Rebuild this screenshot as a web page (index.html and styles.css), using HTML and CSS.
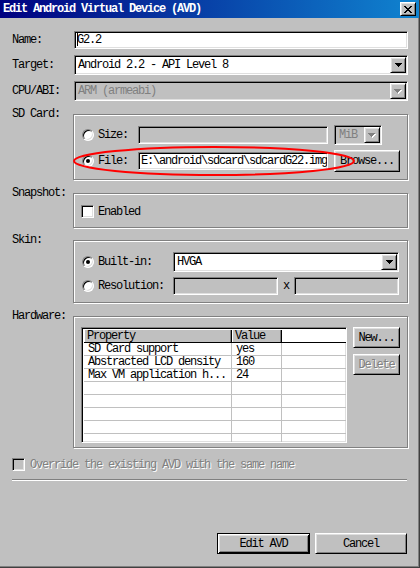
FILE: index.html
```html
<!DOCTYPE html>
<html>
<head>
<meta charset="utf-8">
<title>Edit Android Virtual Device (AVD)</title>
<link rel="stylesheet" href="styles.css">
</head>
<body>
<div class="window">
  <div class="titlebar">
    <span class="title">Edit Android Virtual Device (AVD)</span>
    <span class="close raised">
      <svg width="8" height="7" viewBox="0 0 8 7"><path d="M0 0h2v1H0z M6 0h2v1H6z M1 1h2v1H1z M5 1h2v1H5z M2 2h4v1H2z M3 3h2v1H3z M2 4h4v1H2z M1 5h2v1H1z M5 5h2v1H5z M0 6h2v1H0z M6 6h2v1H6z"/></svg>
    </span>
  </div>

  <div class="form">
    <div class="row r-name">
      <span class="lbl">Name:</span>
      <div class="edit field"><span class="caret"></span>G2.2</div>
    </div>

    <div class="row r-combo">
      <span class="lbl">Target:</span>
      <div class="combo field">
        <span class="combo-text">Android 2.2 - API Level 8</span>
        <span class="drop raised"><svg width="7" height="4" viewBox="0 0 7 4"><path d="M0 0h7v1H0z M1 1h5v1H1z M2 2h3v1H2z M3 3h1v1H3z"/></svg></span>
      </div>
    </div>

    <div class="row r-combo">
      <span class="lbl">CPU/ABI:</span>
      <div class="combo field off">
        <span class="combo-text">ARM (armeabi)</span>
        <span class="drop raised"><svg width="8" height="5" viewBox="0 0 8 5"><path class="hi" d="M1 1h7v1H1z M2 2h5v1H2z M3 3h3v1H3z M4 4h1v1H4z"/><path class="lo" d="M0 0h7v1H0z M1 1h5v1H1z M2 2h3v1H2z M3 3h1v1H3z"/></svg></span>
      </div>
    </div>

    <div class="row grp r-sd">
      <span class="lbl">SD Card:</span>
      <div class="group g-sd">
        <div class="opt o-size">
          <span class="radio"></span>
          <span class="opt-lbl w40">Size:</span>
          <div class="edit off w190"></div>
          <div class="combo off mib">
            <span class="combo-text">MiB</span>
            <span class="drop raised"><svg width="8" height="5" viewBox="0 0 8 5"><path class="hi" d="M1 1h7v1H1z M2 2h5v1H2z M3 3h3v1H3z M4 4h1v1H4z"/><path class="lo" d="M0 0h7v1H0z M1 1h5v1H1z M2 2h3v1H2z M3 3h1v1H3z"/></svg></span>
          </div>
        </div>
        <div class="opt o-file">
          <span class="radio on"></span>
          <span class="opt-lbl w40">File:</span>
          <div class="edit w190">E:\android\sdcard\sdcardG22.img</div>
          <span class="btn raised browse">Browse...</span>
        </div>
      </div>
    </div>

    <div class="row grp r-snap">
      <span class="lbl">Snapshot:</span>
      <div class="group g-snap">
        <div class="opt">
          <span class="check"></span>
          <span class="opt-lbl">Enabled</span>
        </div>
      </div>
    </div>

    <div class="row grp r-skin">
      <span class="lbl">Skin:</span>
      <div class="group g-skin">
        <div class="opt o-built">
          <span class="radio on"></span>
          <span class="opt-lbl w75">Built-in:</span>
          <div class="combo skin-combo">
            <span class="combo-text">HVGA</span>
            <span class="drop raised"><svg width="7" height="4" viewBox="0 0 7 4"><path d="M0 0h7v1H0z M1 1h5v1H1z M2 2h3v1H2z M3 3h1v1H3z"/></svg></span>
          </div>
        </div>
        <div class="opt o-res">
          <span class="radio"></span>
          <span class="opt-lbl w75">Resolution:</span>
          <div class="edit off w105"></div>
          <span class="times">x</span>
          <div class="edit off w105"></div>
        </div>
      </div>
    </div>

    <div class="row grp r-hw">
      <span class="lbl">Hardware:</span>
      <div class="group g-hw">
        <div class="table">
          <div class="thead">
            <span class="th">Property</span>
            <span class="th">Value</span>
            <span class="th"></span>
          </div>
          <div class="tr"><span class="td">SD Card support</span><span class="td">yes</span><span class="td"></span></div>
          <div class="tr"><span class="td">Abstracted LCD density</span><span class="td">160</span><span class="td"></span></div>
          <div class="tr"><span class="td">Max VM application h...</span><span class="td">24</span><span class="td"></span></div>
          <div class="tr"><span class="td"></span><span class="td"></span><span class="td"></span></div>
          <div class="tr"><span class="td"></span><span class="td"></span><span class="td"></span></div>
          <div class="tr"><span class="td"></span><span class="td"></span><span class="td"></span></div>
          <div class="tr"><span class="td"></span><span class="td"></span><span class="td"></span></div>
          <div class="tr"><span class="td"></span><span class="td"></span><span class="td"></span></div>
        </div>
        <div class="side">
          <span class="btn raised">New...</span>
          <span class="btn raised dis">Delete</span>
        </div>
      </div>
    </div>

    <div class="override">
      <span class="check off"></span>
      <span class="dis">Override the existing AVD with the same name</span>
    </div>

    <div class="sep"></div>

    <div class="actions">
      <span class="btn default w93">Edit AVD</span>
      <span class="btn raised w92">Cancel</span>
    </div>
  </div>

  <svg class="mark" width="290" height="34" viewBox="0 0 290 34"><ellipse cx="142" cy="16" rx="140" ry="14" fill="none" stroke="#f00" stroke-width="2"/></svg>
</div>
</body>
</html>
```

FILE: styles.css
```css
* { box-sizing: border-box; }

html, body {
  margin: 0;
  padding: 0;
}

body {
  width: 420px;
  height: 568px;
  overflow: hidden;
  background: #c0c0c0;
  color: #000;
  font-family: "Liberation Mono", "DejaVu Sans Mono", monospace;
  font-size: 12px;
  letter-spacing: -1.2px;
  line-height: 12px;
}

.window {
  position: relative;
  width: 420px;
  height: 568px;
  background: #c0c0c0;
  box-shadow: inset -1px -1px 0 #404040, inset -2px -2px 0 #808080;
}

/* ---------- title bar ---------- */
.titlebar {
  width: 419px;
  height: 18px;
  display: flex;
  align-items: center;
  justify-content: space-between;
  padding: 0 3px 0 3px;
  background: linear-gradient(90deg, #000080, #1084d0);
}

.title {
  color: #fff;
  font-weight: bold;
  white-space: nowrap;
}

.close {
  width: 16px;
  height: 14px;
  display: flex;
  align-items: center;
  justify-content: center;
}

/* ---------- bevels ---------- */
.raised {
  background: #c0c0c0;
  border: 1px solid;
  border-color: #fff #000 #000 #fff;
  box-shadow: inset 1px 1px 0 #dfdfdf, inset -1px -1px 0 #808080;
}

.edit, .combo, .check, .table {
  border: 1px solid;
  border-color: #808080 #fff #fff #808080;
  box-shadow: inset 1px 1px 0 #000, inset -1px -1px 0 #dfdfdf;
}

/* ---------- form grid ---------- */
.form {
  width: 407px;
  padding: 13px 0 0 12px;
}

.row {
  display: grid;
  grid-template-columns: 61px 335px;
  align-items: center;
}

.lbl { white-space: nowrap; }

.field { margin-left: 1px; width: 334px; }

.r-name { height: 18px; }
.r-combo { height: 20px; margin-top: 6px; }

.edit {
  height: 18px;
  background: #fff;
  padding: 0 2px;
  line-height: 16px;
  white-space: nowrap;
  overflow: hidden;
}

.edit.off { background: #c0c0c0; }

.caret {
  display: inline-block;
  width: 1px;
  height: 13px;
  background: #000;
  vertical-align: -3px;
  margin-right: -1px;
}

.combo {
  height: 20px;
  display: flex;
  align-items: center;
  background: #fff;
  padding: 1px;
}

.combo.off { background: #c0c0c0; color: #808080; }

.combo-text {
  flex: 1;
  padding-left: 2px;
  white-space: nowrap;
  overflow: hidden;
}

.drop {
  flex: none;
  width: 16px;
  height: 16px;
  display: flex;
  align-items: center;
  justify-content: center;
}

.drop svg { display: block; }
.drop .hi { fill: #fff; }
.drop .lo { fill: #808080; }

/* ---------- group boxes ---------- */
.grp { align-items: start; }

.group {
  margin-top: 6px;
  border: 1px solid #808080;
  box-shadow: inset 1px 1px 0 #fff, 1px 1px 0 #fff;
}

.r-sd { margin-top: 7px; }
.r-snap { margin-top: 7px; }
.r-skin { margin-top: 6px; }
.r-hw { margin-top: 7px; }

.g-sd { height: 66px; padding: 10px 0 0 8px; }
.g-snap { height: 35px; padding: 11px 0 0 7px; }
.g-skin { height: 63px; padding: 11px 0 0 8px; }
.g-hw { height: 132px; padding: 10px 0 0 7px; display: flex; gap: 6px; }

.opt {
  display: flex;
  align-items: center;
}

.o-size { height: 20px; }
.o-file { height: 22px; margin-top: 5px; }
.o-built { height: 20px; }
.o-res { height: 18px; margin-top: 5px; }

.opt-lbl { white-space: nowrap; margin-left: 4px; }
.w40 { width: 40px; }
.w75 { width: 75px; }
.w190 { width: 190px; }
.w105 { width: 105px; }

.mib { width: 48px; margin-left: 6px; }
.mib .combo-text { padding-left: 3px; }

.browse { width: 66px; height: 22px; margin-left: 6px; }

.skin-combo { width: 226px; }

.times {
  width: 16px;
  text-align: center;
}

.radio {
  position: relative;
  flex: none;
  width: 12px;
  height: 12px;
  border-radius: 50%;
  background: #fff;
  border: 1px solid;
  border-color: #808080 #fff #fff #808080;
  box-shadow: inset 1px 1px 0 #000, inset -1px -1px 0 #dfdfdf;
}

.radio.on::after {
  content: "";
  position: absolute;
  left: 3px;
  top: 3px;
  width: 4px;
  height: 4px;
  border-radius: 50%;
  background: #000;
}

.check {
  flex: none;
  width: 13px;
  height: 13px;
  background: #fff;
}

.check.off { background: #c0c0c0; }

/* ---------- table ---------- */
.table {
  width: 266px;
  height: 116px;
  background: #fff;
  padding: 2px 1px 1px 2px;
  overflow: hidden;
}

.thead, .tr {
  display: grid;
  grid-template-columns: 148px 50px 64px;
}

.th {
  height: 13px;
  padding-left: 3px;
  background: #c0c0c0;
  border-right: 1px solid #000;
  border-bottom: 1px solid #000;
  box-shadow: inset 1px 0 0 #fff, inset -1px 0 0 #808080;
  line-height: 12px;
}

.th:last-child {
  background: #fff;
  border-right: 0;
  box-shadow: none;
}

.td {
  height: 13px;
  padding-left: 4px;
  border-bottom: 1px solid #c0c0c0;
  border-right: 1px solid #c0c0c0;
  line-height: 12px;
  white-space: nowrap;
  overflow: hidden;
}

.td:last-child { border-right: 0; }

.side {
  display: flex;
  flex-direction: column;
  gap: 6px;
}

.side .btn { width: 47px; height: 21px; }

/* ---------- buttons ---------- */
.btn {
  display: flex;
  align-items: center;
  justify-content: center;
  white-space: nowrap;
}

.default {
  background: #c0c0c0;
  border: 1px solid #000;
  box-shadow: inset 1px 1px 0 #fff, inset -1px -1px 0 #000, inset 2px 2px 0 #dfdfdf, inset -2px -2px 0 #808080;
}

.dis {
  color: #808080;
  text-shadow: 1px 1px 0 #fff;
}

.override {
  display: flex;
  align-items: center;
  gap: 5px;
  height: 13px;
  margin-top: 10px;
}

.sep {
  width: 395px;
  height: 2px;
  margin-top: 8px;
  border-top: 1px solid #808080;
  border-bottom: 1px solid #fff;
}

.actions {
  width: 395px;
  height: 21px;
  margin-top: 52px;
  display: flex;
  justify-content: flex-end;
  gap: 5px;
}

.actions .btn { height: 21px; }
.w93 { width: 93px; }
.w92 { width: 92px; }

/* hand-drawn highlight around the file option */
.mark {
  position: absolute;
  left: 72px;
  top: 145px;
  pointer-events: none;
}
```
